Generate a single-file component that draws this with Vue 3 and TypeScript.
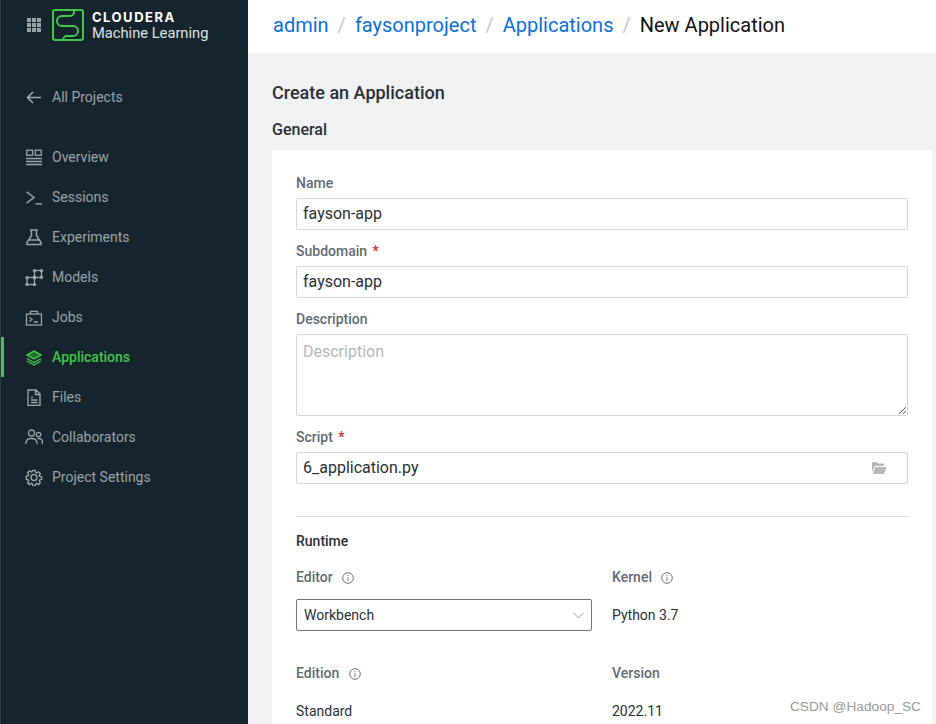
<script setup lang="ts">
const navItems = [
  { label: 'Overview', icon: 'overview' },
  { label: 'Sessions', icon: 'sessions' },
  { label: 'Experiments', icon: 'experiments' },
  { label: 'Models', icon: 'models' },
  { label: 'Jobs', icon: 'jobs' },
  { label: 'Applications', icon: 'applications', active: true },
  { label: 'Files', icon: 'files' },
  { label: 'Collaborators', icon: 'collaborators' },
  { label: 'Project Settings', icon: 'settings' },
]
</script>

<template>
  <div class="page">
    <aside class="sidebar">
      <div class="brand">
        <svg class="grid-icon" width="14" height="14" viewBox="0 0 14 14" fill="#9aa3a8">
          <rect x="0" y="0" width="4" height="4" /><rect x="5" y="0" width="4" height="4" /><rect x="10" y="0" width="4" height="4" />
          <rect x="0" y="5" width="4" height="4" /><rect x="5" y="5" width="4" height="4" /><rect x="10" y="5" width="4" height="4" />
          <rect x="0" y="10" width="4" height="4" /><rect x="5" y="10" width="4" height="4" /><rect x="10" y="10" width="4" height="4" />
        </svg>
        <svg class="logo" width="32" height="32" viewBox="0 0 32 32" fill="none" stroke="#43c44a" stroke-width="2">
          <rect x="1" y="1" width="30" height="30" rx="2" />
          <path d="M22 1v2a4 4 0 0 1-4 4H10a5 5 0 0 0 0 10h11a5 5 0 0 1 0 10h-6a4 4 0 0 0-4 4" />
        </svg>
        <div class="brand-text">
          <div class="brand-name">CLOUDERA</div>
          <div class="brand-sub">Machine Learning</div>
        </div>
      </div>

      <a class="nav-item back">
        <svg class="nav-icon" width="18" height="18" viewBox="0 0 18 18" fill="none" stroke="#a3abb0" stroke-width="1.500">
          <path d="M16 9.500H2.500M8 4 2.500 9.500 8 15" />
        </svg>
        <span>All Projects</span>
      </a>

      <nav class="nav">
        <a v-for="item in navItems" :key="item.label" class="nav-item" :class="{ active: item.active }">
          <svg class="nav-icon" width="18" height="18" viewBox="0 0 18 18" fill="none" stroke="currentColor" stroke-width="1.300">
            <template v-if="item.icon === 'overview'">
              <rect x="1.700" y="2.200" width="6" height="5" /><rect x="10.300" y="2.200" width="6" height="5" />
              <path d="M1 10.500h16M1 13.500h16M1 16.500h16" />
            </template>
            <template v-else-if="item.icon === 'sessions'">
              <path d="M1.500 3.800 9 9.500l-7.500 5.700" stroke-width="1.500" /><path d="M10.500 15.800h6.500" stroke-width="1.500" />
            </template>
            <template v-else-if="item.icon === 'experiments'">
              <path d="M5 2h8M6.500 2v5.500L1.800 15a1 1 0 0 0 .9 1.500h12.600a1 1 0 0 0 .9-1.500L11.500 7.500V2M4.500 12h9" stroke-width="1.500" />
            </template>
            <template v-else-if="item.icon === 'models'">
              <rect x="9.500" y="2.500" width="7" height="7" /><rect x="2" y="9.500" width="7.500" height="7" />
              <g fill="currentColor" stroke="none">
                <circle cx="9.500" cy="2.700" r="1.700" /><circle cx="16.400" cy="2.700" r="1.700" /><circle cx="16.400" cy="9.300" r="1.700" /><circle cx="9.500" cy="9.500" r="2" />
                <circle cx="2" cy="9.700" r="1.700" /><circle cx="2" cy="16.400" r="1.700" /><circle cx="9.500" cy="16.400" r="1.700" />
              </g>
            </template>
            <template v-else-if="item.icon === 'jobs'">
              <rect x="1.500" y="6" width="15" height="11" /><path d="M5.500 6V3.300h7V6M4.500 9.500l2.500 2-2.500 2M8.500 14h4.500" />
            </template>
            <template v-else-if="item.icon === 'applications'">
              <path d="M9 3 16 7 9 11 2 7Z" fill="currentColor" fill-opacity=".45" stroke-width="1.500" /><path d="M2 10.500l7 4 7-4M2 13l7 4 7-4" stroke-width="1.400" />
            </template>
            <template v-else-if="item.icon === 'files'">
              <path d="M3 2h8l4 4v11.500H3ZM10.500 2v4.500H15M6 9.500h2M6 12h6.500M6 14.500h6.500" stroke-width="1.400" />
            </template>
            <template v-else-if="item.icon === 'collaborators'">
              <circle cx="6.500" cy="5" r="3" /><circle cx="13.500" cy="6.500" r="2.200" />
              <path d="M1 16v-1.500a5 5 0 0 1 5-4h1a5 5 0 0 1 5 4V16M12.500 10.500h1.500a3.500 3.500 0 0 1 3.400 3.500v2" />
            </template>
            <template v-else>
              <circle cx="9" cy="9.500" r="3" stroke-width="1.400" />
              <path d="M7.600 1h2.800l.4 2.300 1.300.6 2-1.300 2 2-1.300 2 .6 1.300 2.100.4v2.800l-2.100.4-.6 1.300 1.300 2-2 2-2-1.300-1.300.6-.4 2.100H7.600l-.4-2.100-1.300-.6-2 1.300-2-2 1.300-2-.6-1.300-2.100-.4V7.300l2.100-.4.600-1.300-1.300-2 2-2 2 1.300 1.300-.6Z" transform="translate(.9 1.400) scale(.9)" stroke-width="1.500" />
            </template>
          </svg>
          <span>{{ item.label }}</span>
        </a>
      </nav>
    </aside>

    <main class="main">
      <header class="crumbs">
        <a>admin</a><span class="sep">/</span>
        <a>faysonproject</a><span class="sep">/</span>
        <a>Applications</a><span class="sep">/</span>
        <span class="current">New Application</span>
      </header>

      <section class="content">
        <h1>Create an Application</h1>
        <h2>General</h2>
        <div class="card">
          <label class="label">Name</label>
          <input class="field" value="fayson-app" />

          <label class="label">Subdomain <i>*</i></label>
          <input class="field" value="fayson-app" />

          <label class="label">Description</label>
          <textarea class="field area" placeholder="Description"></textarea>

          <label class="label">Script <i>*</i></label>
          <div class="script-wrap">
            <input class="field" value="6_application.py" />
            <svg class="folder" width="15" height="12" viewBox="0 0 15 12" fill="#b5b7b8">
              <path d="M0 1a1 1 0 0 1 1-1h3.500l1.300 1.500H11a1 1 0 0 1 1 1V4H4a2 2 0 0 0-1.800 1.200L0 10Z" />
              <path d="M3.300 5h11.300L12.300 11a1.500 1.500 0 0 1-1.300 1H.8Z" />
            </svg>
          </div>

          <hr />

          <div class="runtime-title">Runtime</div>
          <div class="runtime">
            <div class="col">
              <div class="label inline">Editor
                <svg class="info" width="12" height="12" viewBox="0 0 12 12" fill="none" stroke="#6b757c"><circle cx="6" cy="6" r="5.300" /><path d="M6 5.200V9M6 3v1.200" /></svg>
              </div>
              <div class="select">
                <span>Workbench</span>
                <svg width="11" height="7" viewBox="0 0 11 7" fill="none" stroke="#9aa1a6"><path d="M.5.700 5.500 6l5-5.300" /></svg>
              </div>
            </div>
            <div class="col">
              <div class="label inline">Kernel
                <svg class="info" width="12" height="12" viewBox="0 0 12 12" fill="none" stroke="#6b757c"><circle cx="6" cy="6" r="5.300" /><path d="M6 5.200V9M6 3v1.200" /></svg>
              </div>
              <div class="value">Python 3.7</div>
            </div>
            <div class="col">
              <div class="label inline">Edition
                <svg class="info" width="12" height="12" viewBox="0 0 12 12" fill="none" stroke="#6b757c"><circle cx="6" cy="6" r="5.300" /><path d="M6 5.200V9M6 3v1.200" /></svg>
              </div>
              <div class="value">Standard</div>
            </div>
            <div class="col">
              <div class="label inline">Version</div>
              <div class="value">2022.11</div>
            </div>
          </div>
        </div>
      </section>
    </main>

    <div class="watermark">CSDN @Hadoop_SC</div>
  </div>
</template>

<style>
html, body { margin: 0; overflow: hidden; }
</style>

<style scoped>
.page {
  position: relative;
  display: flex;
  width: 936px;
  height: 724px;
  overflow: hidden;
  font-family: Roboto, "Liberation Sans", sans-serif;
  background: #f0f1f3;
}
.sidebar {
  width: 247px;
  flex: none;
  background: #16252d;
  border-left: 1px solid #2b3a42;
}
.brand {
  display: flex;
  align-items: center;
  height: 49px;
  padding-left: 26px;
}
.grid-icon { margin-right: 11px; }
.logo { margin-right: 8px; }
.brand-text { color: #fff; margin-top: 2px; }
.brand-name { font-family: Inter, Roboto, sans-serif; font-size: 13px; font-weight: 700; letter-spacing: 1.500px; line-height: 15px; }
.brand-sub { font-size: 14.700px; line-height: 16px; color: #dfe3e5; }
.nav-item {
  display: flex;
  align-items: center;
  height: 40px;
  padding-left: 24px;
  font-size: 14px;
  color: #9aa3a8;
  position: relative;
}
.nav-item .nav-icon { margin-right: 9px; flex: none; }
.back { margin-top: 28px; }
.nav { margin-top: 20px; }
.active { color: #43c44a; font-weight: 500; }
.active::before {
  content: '';
  position: absolute;
  left: 0;
  top: 0;
  width: 3px;
  height: 40px;
  background: #43c44a;
}
.main { flex: 1; min-width: 0; display: flex; flex-direction: column; }
.crumbs {
  height: 53px;
  flex: none;
  background: #fff;
  display: flex;
  align-items: center;
  padding: 0 0 4px 25px;
  font-size: 20px;
  color: #0d6fdc;
  box-sizing: border-box;
}
.sep { color: #c4c8cb; margin: 0 9px; }
.current { color: #111; }
.content { padding: 0 4px 0 24px; }
h1 { margin: 29px 0 0; font-size: 18px; font-weight: 500; line-height: 22px; color: #2a3036; }
h2 { margin: 16px 0 0; font-size: 16px; font-weight: 500; line-height: 20px; color: #2a3036; }
.card {
  margin-top: 10px;
  background: #fff;
  padding: 24px 24px 0;
  height: 600px;
  box-sizing: border-box;
}
.label {
  display: block;
  height: 20px;
  line-height: 18px;
  font-size: 14px;
  font-weight: 500;
  color: #5f6b73;
  margin: 0 0 4px;
}
.label i { color: #d62828; font-style: normal; margin-left: 2px; }
.field {
  display: block;
  width: 100%;
  height: 32px;
  box-sizing: border-box;
  border: 1px solid #d4d6d8;
  border-radius: 2px;
  padding: 0 6px 2px;
  margin: 0 0 12px;
  font: 16px Roboto, sans-serif;
  color: #2a3036;
  outline: none;
  background: #fff;
}
.area { height: 82px; padding: 7px 6px; resize: vertical; }
.area::placeholder { color: #b4b7ba; }
.script-wrap { position: relative; }
.folder { position: absolute; right: 21px; top: 10px; }
hr { border: 0; border-top: 1px solid #d9dbdd; margin: 32px 0 0; }
.runtime-title {
  margin-top: 15px;
  font-size: 14px;
  font-weight: 500;
  line-height: 18px;
  color: #2a3036;
}
.runtime {
  display: grid;
  grid-template-columns: 316px 1fr;
  margin-top: 17px;
}
.col { min-height: 96px; }
.inline { display: flex; align-items: center; margin: 0; }
.info { margin-left: 9.500px; margin-top: 2px; }
.select {
  width: 296px;
  height: 32px;
  margin-top: 12px;
  box-sizing: border-box;
  border: 1px solid #6f787e;
  border-radius: 2px;
  padding: 0 7px;
  display: flex;
  align-items: center;
  justify-content: space-between;
  font-size: 14px;
  color: #2a3036;
}
.value { font-size: 14px; color: #2a3036; line-height: 20px; margin-top: 18px; }
.watermark {
  position: absolute;
  right: 15px;
  top: 698px;
  font: 13.700px "Liberation Sans", sans-serif;
  color: #999;
  line-height: 18px;
}
</style>
